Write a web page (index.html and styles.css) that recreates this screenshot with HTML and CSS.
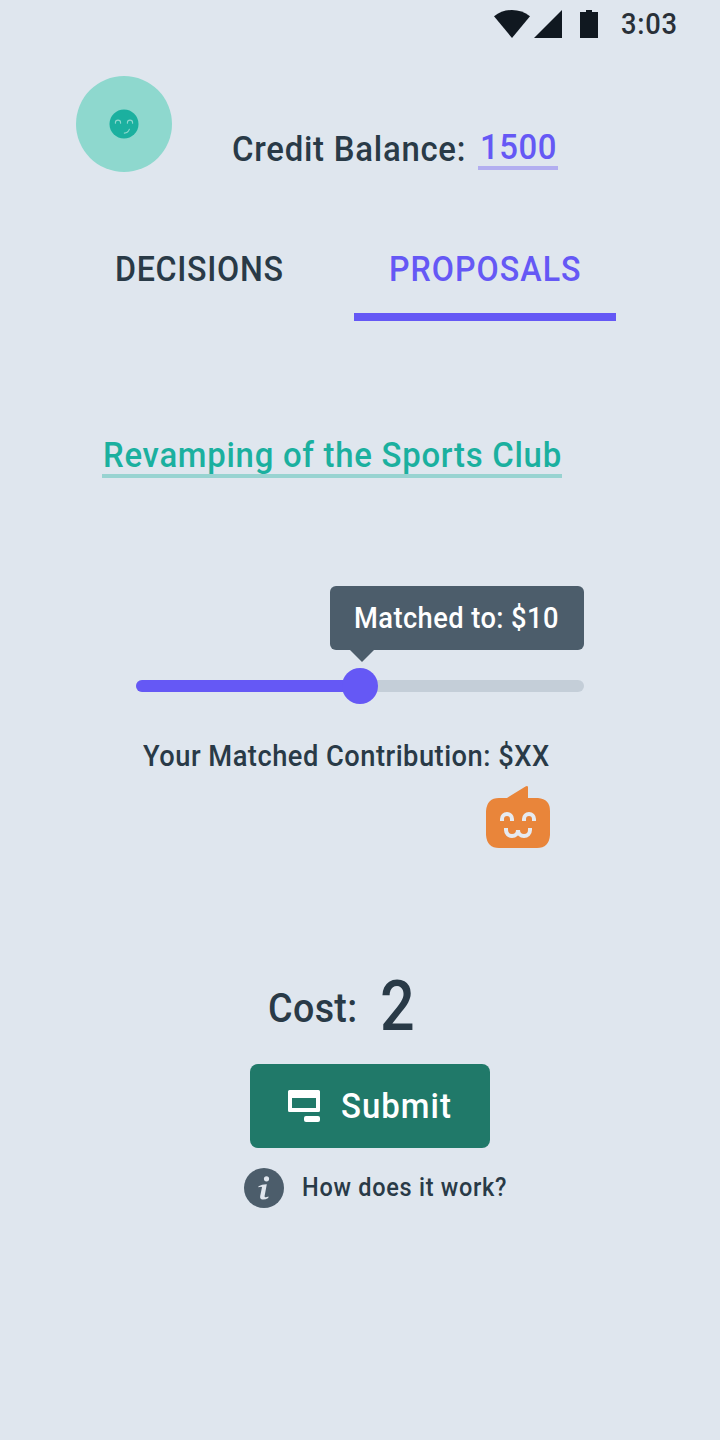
FILE: index.html
```html
<!DOCTYPE html>
<html lang="en">
<head>
<meta charset="utf-8">
<title>Proposals</title>
<link rel="stylesheet" href="styles.css">
</head>
<body>
<main class="screen">
  <header class="status">
    <svg class="status-icons" width="106" height="30" viewBox="0 0 106 30" fill="#101820">
      <path d="M0 6.2Q8 0 18 0T36 6.2L18 28Z"/>
      <path d="M40 28L68 0V28Z"/>
      <path d="M86 2H92V0H98V2H104V28H86Z"/>
    </svg>
    <span class="clock narrow">3:03</span>
  </header>

  <section class="account">
    <svg class="avatar" width="96" height="96" viewBox="0 0 96 96">
      <circle cx="48" cy="48" r="48" fill="#8ed8ce"/>
      <circle cx="48" cy="48" r="14.5" fill="#1bb09f"/>
      <g fill="none" stroke="#8ed8ce" stroke-width="1.1" stroke-linecap="round">
        <path d="M39.4 47.3V46.7A2.6 2.6 0 0 1 44.6 46.7V47.3M51.4 47.3V46.7A2.6 2.6 0 0 1 56.6 46.7V47.3"/>
        <path d="M53.4 53.2A5.5 5.5 0 0 1 48.3 57.1"/>
      </g>
    </svg>
    <div class="balance-label"><span class="narrow">Credit Balance:</span></div>
    <a class="balance"><span class="narrow">1500</span></a>
  </section>

  <nav class="tabs">
    <a class="tab"><span class="decisions narrow">DECISIONS</span></a>
    <a class="tab active"><span class="proposals narrow">PROPOSALS</span></a>
  </nav>

  <h1 class="title"><a><span class="narrow">Revamping of the Sports Club</span></a></h1>

  <section class="matching">
    <div class="tooltip"><span class="narrow">Matched to: $10</span></div>
    <div class="slider"><div class="fill"></div><div class="knob"></div></div>
    <p class="contribution"><span class="narrow">Your Matched Contribution: $XX</span></p>
    <svg class="mascot" width="64" height="62" viewBox="0 0 64 62">
      <path fill="#e9853a" d="M21 12L39.5 .4Q42 -.7 42 1.5V12H52Q64 13 64 25V49Q63 62 51 62H13Q1 62 0 49V25Q1 12 13 12Z"/>
      <g fill="none" stroke="#e6eaf0" stroke-width="4">
        <path d="M16 35V33A5 5 0 0 1 26 33V35M38 35V33A5 5 0 0 1 48 33V35"/>
        <path d="M20 42V44A6 6 0 0 0 32 44A6 6 0 0 0 44 44V42"/>
      </g>
    </svg>
  </section>

  <section class="checkout">
    <div class="cost"><div class="cost-label"><span class="narrow">Cost:</span></div><span class="cost-value narrow">2</span></div>
    <button class="submit">
      <svg width="32" height="32" viewBox="0 0 32 32" fill="#fff">
        <path fill-rule="evenodd" d="M1.5 0H30.5Q32 0 32 1.5V20.5Q32 22 30.5 22H1.5Q0 22 0 20.5V1.5Q0 0 1.5 0ZM4 8V18H28V8Z"/>
        <rect x="16" y="26" width="16" height="6" rx="2"/>
      </svg>
      <span class="narrow">Submit</span>
    </button>
    <a class="help">
      <svg width="40" height="40" viewBox="0 0 40 40">
        <circle cx="20" cy="20" r="20" fill="#4c5d6b"/>
        <circle cx="22.5" cy="10.8" r="2.6" fill="#e0e6ee"/>
        <path fill="#e0e6ee" d="M14.5 18.2Q18 16.2 22.8 16.3L20.6 28Q20.4 29.6 22 29.2L24.6 28.4L24.2 30Q21.5 31.8 18.6 31.6Q15.6 31.2 16.2 28L18 19.3Q18 18.3 14.3 19.3Z"/>
      </svg>
      <span class="narrow">How does it work?</span>
    </a>
  </section>
</main>
</body>
</html>
```
FILE: styles.css
```css
* { box-sizing: border-box; }
body { margin: 0; background: #dfe6ee; }
.screen {
  width: 720px;
  height: 1440px;
  overflow: hidden;
  background: #dfe6ee;
  color: #293a47;
  font-family: Roboto, "Liberation Sans", sans-serif;
  font-weight: 500;
}
svg { display: block; flex: none; }
span, a, p { white-space: nowrap; }
.narrow { display: inline-block; transform: scaleX(.94); transform-origin: left center; }

.status { display: flex; height: 76px; padding: 10px 0 0 494px; }
.clock { margin-left: 21px; font-size: 29px; line-height: 28px; color: #293038; letter-spacing: .8px; }

.account { display: flex; height: 144px; padding-left: 76px; }
.balance-label { width: 246px; margin-left: 60px; padding-top: 54px; font-size: 35px; line-height: 40px; letter-spacing: .8px; }
.balance {
  width: 80px;
  height: 44px;
  margin-top: 50px;
  padding: 2px 0 0 2px;
  border-bottom: 4px solid #b2aef0;
  color: #6558f5;
  font-size: 35px;
  line-height: 40px;
  letter-spacing: .6px;
}

.tabs { display: flex; height: 190px; padding: 29px 0 0 78px; }
.tab { width: 262px; height: 72px; margin-right: 14px; padding: 1px 0 0 37px; font-size: 35px; line-height: 40px; }
.tab.active { padding-left: 35px; border-bottom: 8px solid #6558f5; color: #6558f5; }
.tab .narrow { transform: scaleX(.92); }
.decisions { letter-spacing: .75px; }
.proposals { letter-spacing: 1.1px; }

.title { height: 176px; margin: 0; padding: 25px 0 0 102px; font-size: 35px; line-height: 39px; font-weight: 500; color: #1bb09f; }
.title a { display: block; width: 460px; height: 43px; padding: 1px 0 0 1px; border-bottom: 4px solid #98d3d1; letter-spacing: .78px; }

.matching { height: 262px; }
.tooltip {
  position: relative;
  width: 254px;
  height: 64px;
  margin-left: 330px;
  padding-left: 24px;
  border-radius: 6px;
  background: #4c5d6b;
  color: #fff;
  font-size: 29px;
  line-height: 64px;
  letter-spacing: .46px;
}
.tooltip::after {
  content: "";
  position: absolute;
  left: 20px;
  top: 100%;
  border: 12px solid transparent;
  border-top-color: #4c5d6b;
  border-bottom: 0;
}
.slider { position: relative; width: 448px; height: 12px; margin: 30px 0 0 136px; border-radius: 6px; background: #c4ced8; }
.fill { width: 50%; height: 12px; border-radius: 6px; background: #6558f5; }
.knob { position: absolute; left: calc(50% - 18px); top: -12px; width: 36px; height: 36px; border-radius: 50%; background: #6558f5; }
.contribution { height: 40px; margin: 44px 0 10px 143px; font-size: 29px; line-height: 40px; letter-spacing: .53px; }
.mascot { margin-left: 486px; }

.checkout { padding-top: 121px; }
.cost { display: flex; height: 95px; padding: 1px 0 0 268px; }
.cost-label { width: 112px; padding-top: 19px; font-size: 40px; line-height: 40px; letter-spacing: .4px; }
.cost-value { font-size: 71px; line-height: 72px; }
.cost-value.narrow { transform: scaleX(.86); }
.submit {
  display: flex;
  align-items: center;
  gap: 21px;
  width: 240px;
  height: 84px;
  margin: 0 0 20px 250px;
  padding: 0 0 0 38px;
  border: 0;
  border-radius: 8px;
  background: #207969;
  color: #fff;
  font: 500 35px/40px Roboto, "Liberation Sans", sans-serif;
  letter-spacing: 1.1px;
}
.submit span { padding-top: 2px; }
.help { display: flex; align-items: center; gap: 18px; margin-left: 244px; font-size: 25px; line-height: 40px; letter-spacing: .78px; }
```
